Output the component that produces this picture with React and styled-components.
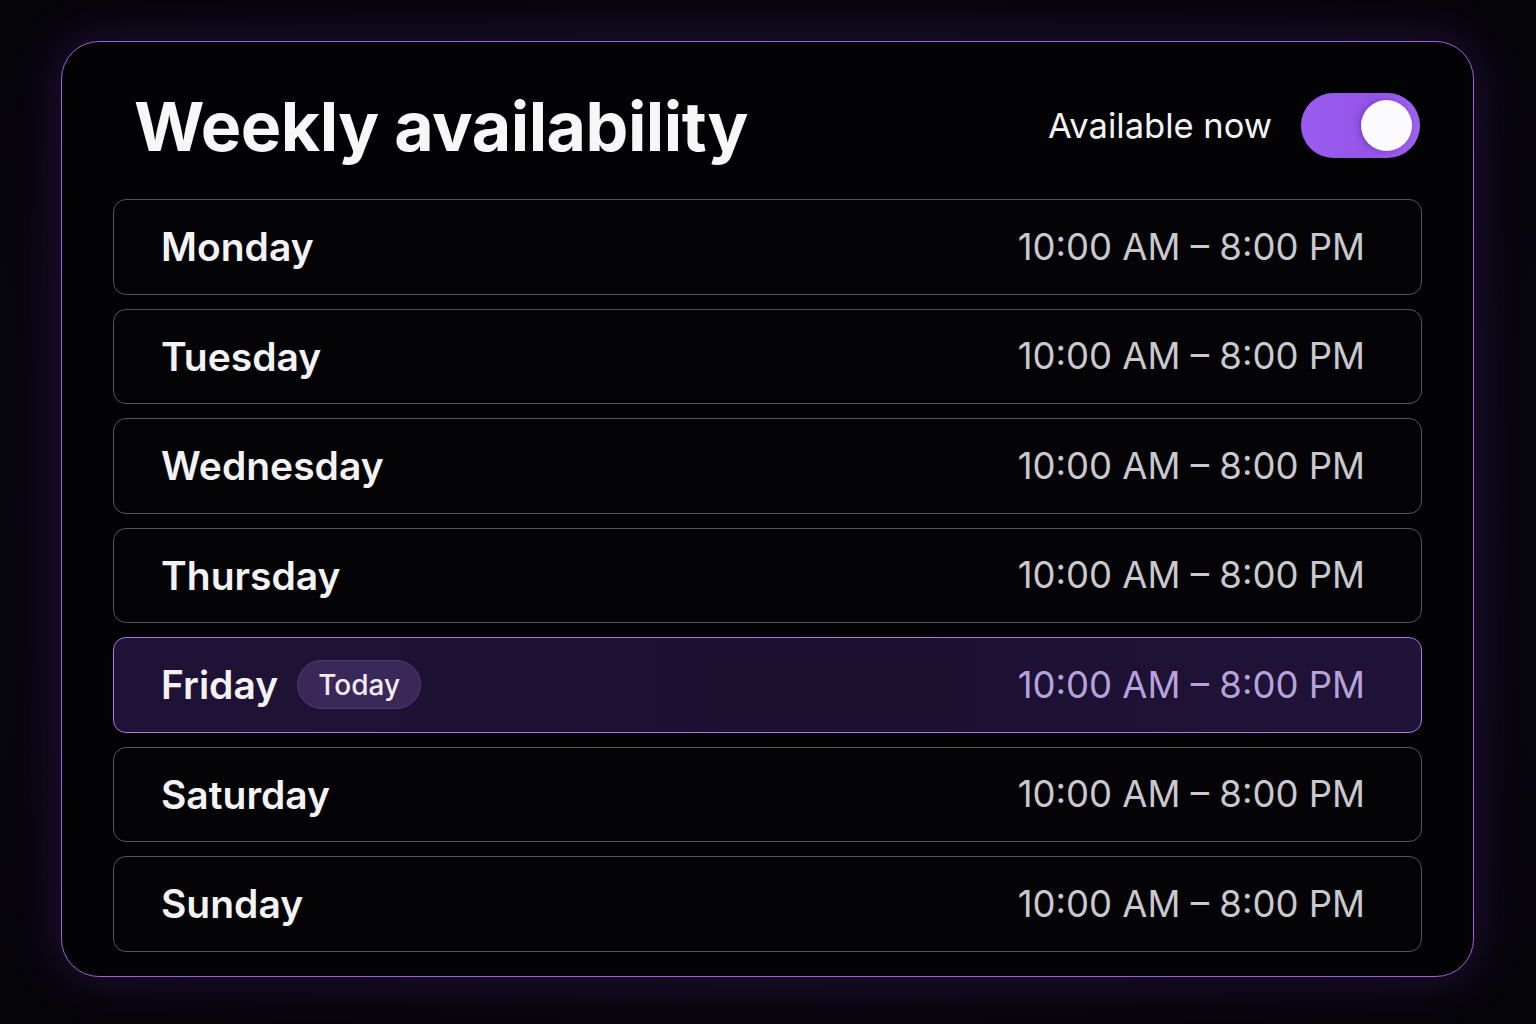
import React from 'react'
import styled, { createGlobalStyle } from 'styled-components'

const GlobalStyle = createGlobalStyle`
  html, body {
    margin: 0;
    padding: 0;
    background: #060509;
  }
  body {
    font-family: Inter, "Noto Sans", "Liberation Sans", sans-serif;
    -webkit-font-smoothing: antialiased;
  }
`

const days = [
  { name: 'Monday' },
  { name: 'Tuesday' },
  { name: 'Wednesday' },
  { name: 'Thursday' },
  { name: 'Friday', today: true },
  { name: 'Saturday' },
  { name: 'Sunday' },
]

function App() {
  return (
    <>
      <GlobalStyle />
      <Page>
        <Card>
          <Header>
            <Title>Weekly availability</Title>
            <Status>
              <StatusLabel>Available now</StatusLabel>
              <Toggle role="switch" aria-checked="true">
                <Knob />
              </Toggle>
            </Status>
          </Header>
          <List>
            {days.map((d) => (
              <Row key={d.name} $today={d.today}>
                <DayCell>
                  <Day>{d.name}</Day>
                  {d.today && <Badge>Today</Badge>}
                </DayCell>
                <Hours $today={d.today}>10:00 AM – 8:00 PM</Hours>
              </Row>
            ))}
          </List>
        </Card>
      </Page>
    </>
  )
}

const Page = styled.div`
  width: 1536px;
  height: 1024px;
  padding: 41px 0 0 61px;
  box-sizing: border-box;
  background: radial-gradient(ellipse at center, #120b1e 0%, #0a0712 55%, #050408 100%);
  overflow: hidden;
`
const Card = styled.div`
  width: 1413px;
  height: 936px;
  box-sizing: border-box;
  border: 1.5px solid #9d62d2;
  border-radius: 38px;
  background: #030305;
  box-shadow: 0 0 40px 6px rgba(90, 40, 150, 0.28);
  padding: 0 51px 0;
  display: flex;
  flex-direction: column;
`
const Header = styled.div`
  flex-shrink: 0;
  height: 157px;
  padding-top: 10px;
  box-sizing: border-box;
  display: flex;
  align-items: center;
  justify-content: space-between;
`
const Title = styled.h1`
  margin: 0 0 0 21px;
  font-size: 68px;
  font-weight: 700;
  letter-spacing: -0.5px;
  color: #f7f7f8;
`
const Status = styled.div`
  display: flex;
  align-items: center;
  gap: 29px;
  margin-right: 2px;
`
const StatusLabel = styled.span`
  font-size: 34.5px;
  font-weight: 400;
  color: #f4f4f6;
`
const Toggle = styled.div`
  width: 119px;
  height: 65px;
  border-radius: 33px;
  background: linear-gradient(90deg, #9b5cf0 0%, #9454e8 60%, #a062ee 100%);
  display: flex;
  align-items: center;
  justify-content: flex-end;
  padding-right: 8px;
  box-sizing: border-box;
`
const Knob = styled.div`
  width: 51px;
  height: 51px;
  border-radius: 50%;
  background: #fbfaff;
  box-shadow: -2px 0 6px rgba(60, 20, 120, 0.35);
`
const List = styled.div`
  flex-shrink: 0;
  display: flex;
  flex-direction: column;
  gap: 14px;
`
const Row = styled.div`
  height: 95.5px;
  box-sizing: border-box;
  border-radius: 13px;
  border: 1.5px solid ${(p) => (p.$today ? '#a978e6' : '#55555b')};
  background: ${(p) => (p.$today ? 'linear-gradient(90deg, #1f1236 0%, #1c1131 60%, #1f1338 100%)' : '#040406')};
  display: flex;
  align-items: center;
  justify-content: space-between;
  padding: 0 56px 0 47px;
`
const DayCell = styled.div`
  display: flex;
  align-items: center;
  gap: 19px;
`
const Day = styled.span`
  font-size: 39px;
  font-weight: 600;
  color: #f3f3f5;
`
const Badge = styled.span`
  height: 49px;
  padding: 0 20px;
  border-radius: 25px;
  background: #3a2858;
  border: 1px solid #4d3a70;
  box-sizing: border-box;
  display: flex;
  align-items: center;
  font-size: 28px;
  font-weight: 500;
  color: #f0ecf8;
`
const Hours = styled.span`
  font-size: 36.5px;
  font-weight: 400;
  color: ${(p) => (p.$today ? '#b9a2dc' : '#c9c9cf')};
`

export default App
